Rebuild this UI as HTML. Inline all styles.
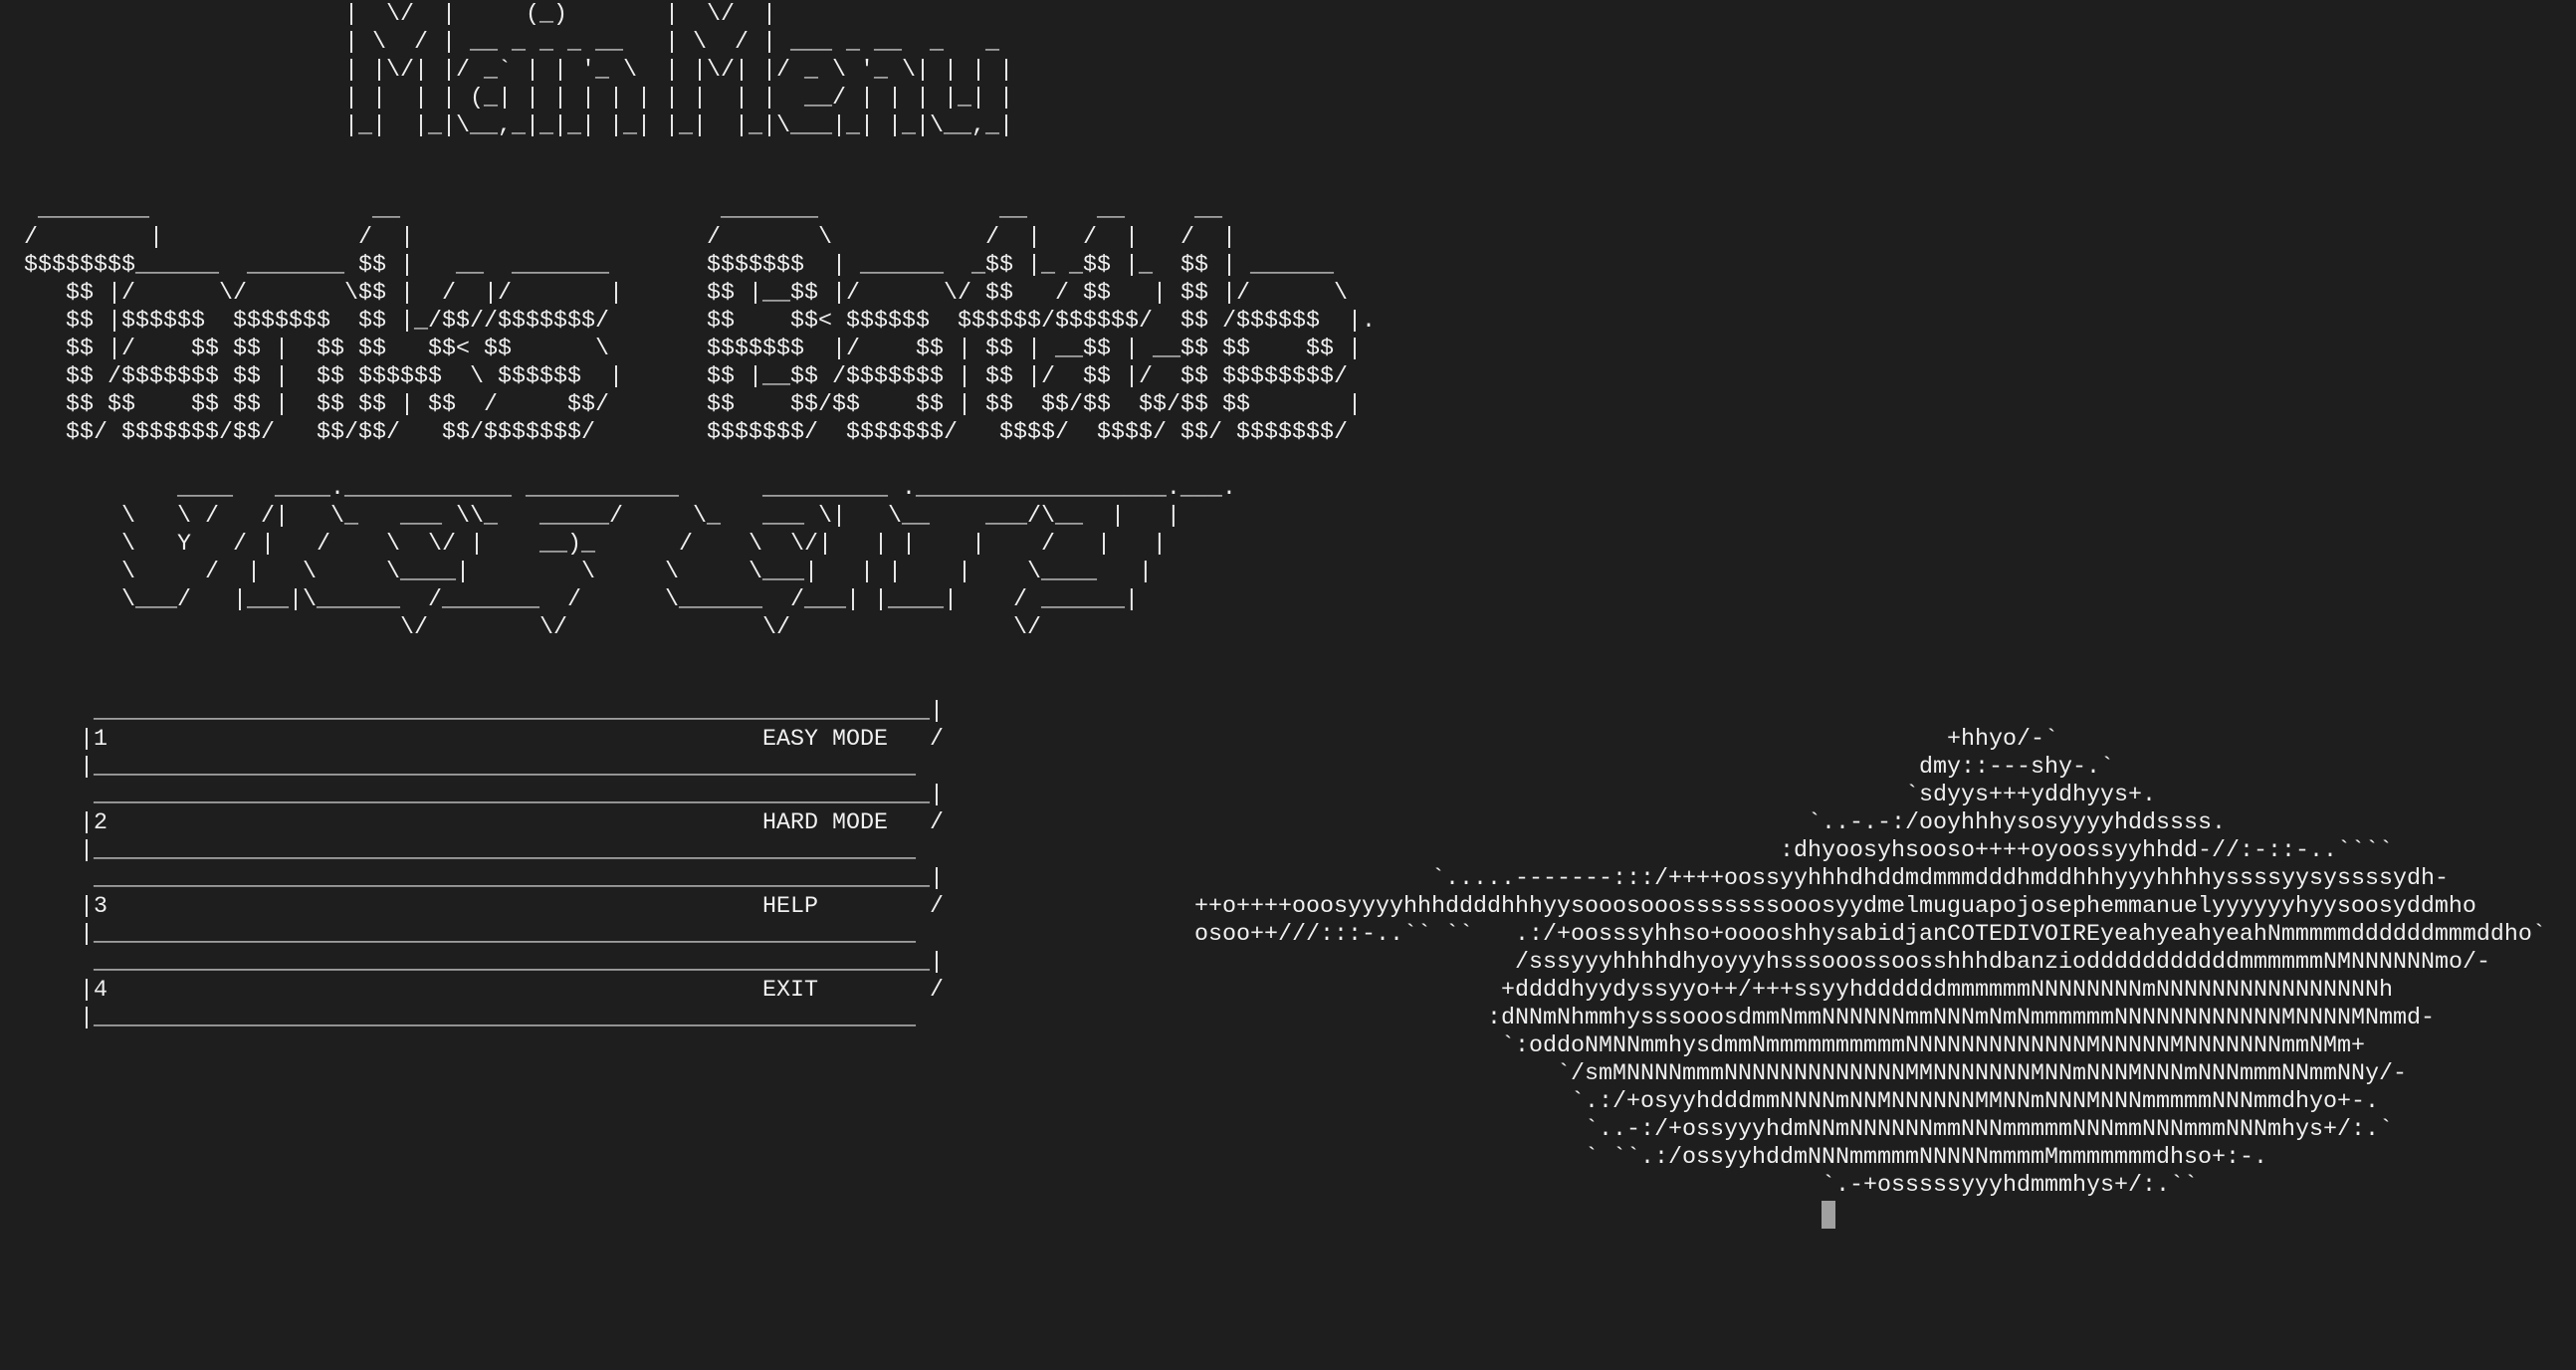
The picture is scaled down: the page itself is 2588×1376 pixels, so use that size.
<!DOCTYPE html>
<html><head><meta charset="utf-8"><style>
html,body{margin:0;padding:0;background:#1e1e1e;width:2588px;height:1376px;overflow:hidden}
.b{position:absolute;margin:0;white-space:pre;font-family:"Liberation Mono",monospace;font-size:23.33px;line-height:28px;color:#f0f0f0}
#cur{position:absolute;left:1830px;top:1206px;width:14px;height:28px;background:#a0a0a0}
</style></head><body>
<pre class="b" style="left:346px;top:-27px"> __  __       _         __  __
|  \/  |     (_)       |  \/  |
| \  / | __ _ _ _ __   | \  / | ___ _ __  _   _
| |\/| |/ _&#96; | | '_ \  | |\/| |/ _ \ '_ \| | | |
| |  | | (_| | | | | | | |  | |  __/ | | | |_| |
|_|  |_|\__,_|_|_| |_| |_|  |_|\___|_| |_|\__,_|</pre>

<pre class="b" style="left:24px;top:197px"> ________                __
/        |              /  |
$$$$$$$$______  _______ $$ |   __  _______
   $$ |/      \/       \$$ |  /  |/       |
   $$ |$$$$$$  $$$$$$$  $$ |_/$$//$$$$$$$/
   $$ |/    $$ $$ |  $$ $$   $$&lt; $$      \
   $$ /$$$$$$$ $$ |  $$ $$$$$$  \ $$$$$$  |
   $$ $$    $$ $$ |  $$ $$ | $$  /     $$/
   $$/ $$$$$$$/$$/   $$/$$/   $$/$$$$$$$/</pre>

<pre class="b" style="left:710px;top:197px"> _______             __     __     __
/       \           /  |   /  |   /  |
$$$$$$$  | ______  _$$ |_ _$$ |_  $$ | ______
$$ |__$$ |/      \/ $$   / $$   | $$ |/      \
$$    $$&lt; $$$$$$  $$$$$$/$$$$$$/  $$ /$$$$$$  |.
$$$$$$$  |/    $$ | $$ | __$$ | __$$ $$    $$ |
$$ |__$$ /$$$$$$$ | $$ |/  $$ |/  $$ $$$$$$$$/
$$    $$/$$    $$ | $$  $$/$$  $$/$$ $$       |
$$$$$$$/  $$$$$$$/   $$$$/  $$$$/ $$/ $$$$$$$/</pre>

<pre class="b" style="left:80px;top:477px">       ____   ____.____________ ___________      _________ .__________________.___.
   \   \ /   /|   \_   ___ \\_   _____/     \_   ___ \|   \__    ___/\__  |   |
   \   Y   / |   /    \  \/ |    __)_      /    \  \/|   | |    |    /   |   |
   \     /  |   \     \____|        \     \     \___|   | |    |    \____   |
   \___/   |___|\______  /_______  /      \______  /___| |____|    / ______|
                       \/        \/              \/                \/</pre>

<pre class="b" style="left:24px;top:701px">     ____________________________________________________________|
    |1                                               EASY MODE   /
    |___________________________________________________________
     ____________________________________________________________|
    |2                                               HARD MODE   /
    |___________________________________________________________
     ____________________________________________________________|
    |3                                               HELP        /
    |___________________________________________________________
     ____________________________________________________________|
    |4                                               EXIT        /
    |___________________________________________________________</pre>

<pre class="b" style="left:1956px;top:729px">+hhyo/-&#96;</pre>
<pre class="b" style="left:1928px;top:757px">dmy::---shy-.&#96;</pre>
<pre class="b" style="left:1914px;top:785px">&#96;sdyys+++yddhyys+.</pre>
<pre class="b" style="left:1816px;top:813px">&#96;..-.-:/ooyhhhysosyyyyhddssss.</pre>
<pre class="b" style="left:1788px;top:841px">:dhyoosyhsooso++++oyoossyyhhdd-//:-::-..&#96;&#96;&#96;&#96;</pre>
<pre class="b" style="left:1438px;top:869px">&#96;.....-------:::/++++oossyyhhhdhddmdmmmdddhmddhhhyyyhhhhyssssyysyssssydh-</pre>
<pre class="b" style="left:1200px;top:897px">++o++++ooosyyyyhhhddddhhhyysooosooosssssssooosyydmelmuguapojosephemmanuelyyyyyyhyysoosyddmho</pre>
<pre class="b" style="left:1200px;top:925px">osoo++///:::-..&#96;&#96; &#96;&#96;   .:/+oosssyhhso+ooooshhysabidjanCOTEDIVOIREyeahyeahyeahNmmmmmddddddmmmddho&#96;</pre>
<pre class="b" style="left:1522px;top:953px">/sssyyyhhhhdhyoyyyhsssooossoosshhhdbanziodddddddddddmmmmmmNMNNNNNNmo/-</pre>
<pre class="b" style="left:1508px;top:981px">+ddddhyydyssyyo++/+++ssyyhddddddmmmmmmNNNNNNNNmNNNNNNNNNNNNNNNNh</pre>
<pre class="b" style="left:1494px;top:1009px">:dNNmNhmmhysssooosdmmNmmNNNNNNmmNNNmNmNmmmmmmNNNNNNNNNNNNMNNNNMNmmd-</pre>
<pre class="b" style="left:1508px;top:1037px">&#96;:oddoNMNNmmhysdmmNmmmmmmmmmmNNNNNNNNNNNNNMNNNNNMNNNNNNNmmNMm+</pre>
<pre class="b" style="left:1564px;top:1065px">&#96;/smMNNNNmmmNNNNNNNNNNNNNMMNNNNNNNMNNmNNNMNNNmNNNmmmNNmmNNy/-</pre>
<pre class="b" style="left:1578px;top:1093px">&#96;.:/+osyyhdddmmNNNNmNNMNNNNNNMMNNmNNNMNNNmmmmmNNNmmdhyo+-.</pre>
<pre class="b" style="left:1592px;top:1121px">&#96;..-:/+ossyyyhdmNNmNNNNNNmmNNNmmmmmNNNmmNNNmmmNNNmhys+/:.&#96;</pre>
<pre class="b" style="left:1592px;top:1149px">&#96; &#96;&#96;.:/ossyyhddmNNNmmmmmNNNNNmmmmMmmmmmmmdhso+:-.</pre>
<pre class="b" style="left:1830px;top:1177px">&#96;.-+osssssyyyhdmmmhys+/:.&#96;&#96;</pre>
<div id="cur"></div>
</body></html>
